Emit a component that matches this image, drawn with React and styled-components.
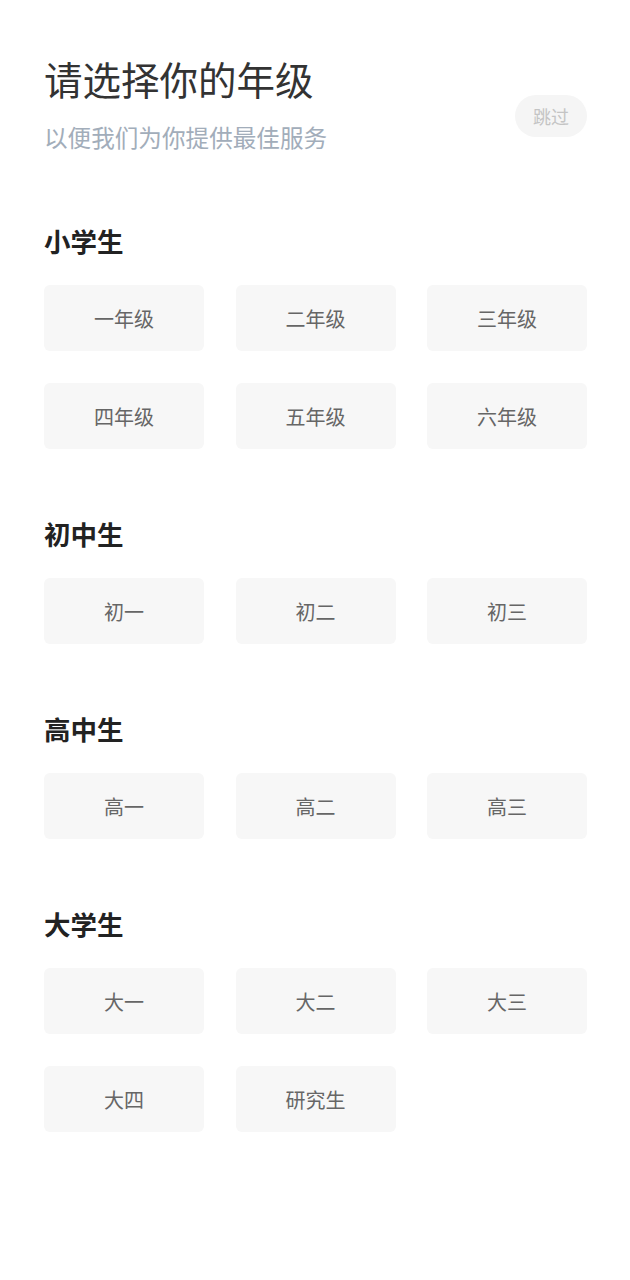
import styled, { createGlobalStyle } from "styled-components";

const GlobalStyle = createGlobalStyle`
    body {
        margin: 0;
        background: #ffffff;
        font-family: "Noto Sans CJK SC", "Noto Sans", sans-serif;
    }
`;

const groups = [
    { title: "小学生", grades: ["一年级", "二年级", "三年级", "四年级", "五年级", "六年级"] },
    { title: "初中生", grades: ["初一", "初二", "初三"] },
    { title: "高中生", grades: ["高一", "高二", "高三"] },
    { title: "大学生", grades: ["大一", "大二", "大三", "大四", "研究生"] },
];

export default function App() {
    return (
        <Page>
            <GlobalStyle />
            <Header>
                <div>
                    <Title>请选择你的年级</Title>
                    <Subtitle>以便我们为你提供最佳服务</Subtitle>
                </div>
                <SkipButton>跳过</SkipButton>
            </Header>
            <Sections>
                {groups.map((group) => (
                    <section key={group.title}>
                        <GroupTitle>{group.title}</GroupTitle>
                        <GradeGrid>
                            {group.grades.map((grade) => (
                                <GradeButton key={grade}>{grade}</GradeButton>
                            ))}
                        </GradeGrid>
                    </section>
                ))}
            </Sections>
        </Page>
    );
}

const Page = styled.div`
    padding: 59px 43px 120px 44px;
    min-height: 1280px;
    box-sizing: border-box;
`;

const Header = styled.div`
    display: flex;
    justify-content: space-between;
    align-items: flex-start;
`;

const Title = styled.h1`
    margin: 0;
    font-size: 38.5px;
    line-height: 38px;
    font-weight: 400;
    color: #333333;
`;

const Subtitle = styled.p`
    margin: 28px 0 0;
    font-size: 23.6px;
    line-height: 24px;
    color: #a2adba;
`;

const SkipButton = styled.button`
    margin-top: 36px;
    width: 72px;
    height: 42px;
    border: none;
    border-radius: 21px;
    background: #f5f5f5;
    color: #c4c4c4;
    font-family: inherit;
    font-size: 18px;
    padding: 0;
`;

const Sections = styled.div`
    display: flex;
    flex-direction: column;
    gap: 72px;
    margin-top: 79px;
`;

const GroupTitle = styled.h2`
    margin: 0 0 31px;
    font-size: 26.5px;
    line-height: 26px;
    font-weight: 700;
    color: #222222;
`;

const GradeGrid = styled.div`
    display: grid;
    grid-template-columns: repeat(3, 160px);
    column-gap: 31.5px;
    row-gap: 32px;
`;

const GradeButton = styled.button`
    height: 66px;
    border: none;
    border-radius: 6px;
    background: #f7f7f7;
    color: #666666;
    font-family: inherit;
    font-size: 20px;
    padding: 0;
`;
